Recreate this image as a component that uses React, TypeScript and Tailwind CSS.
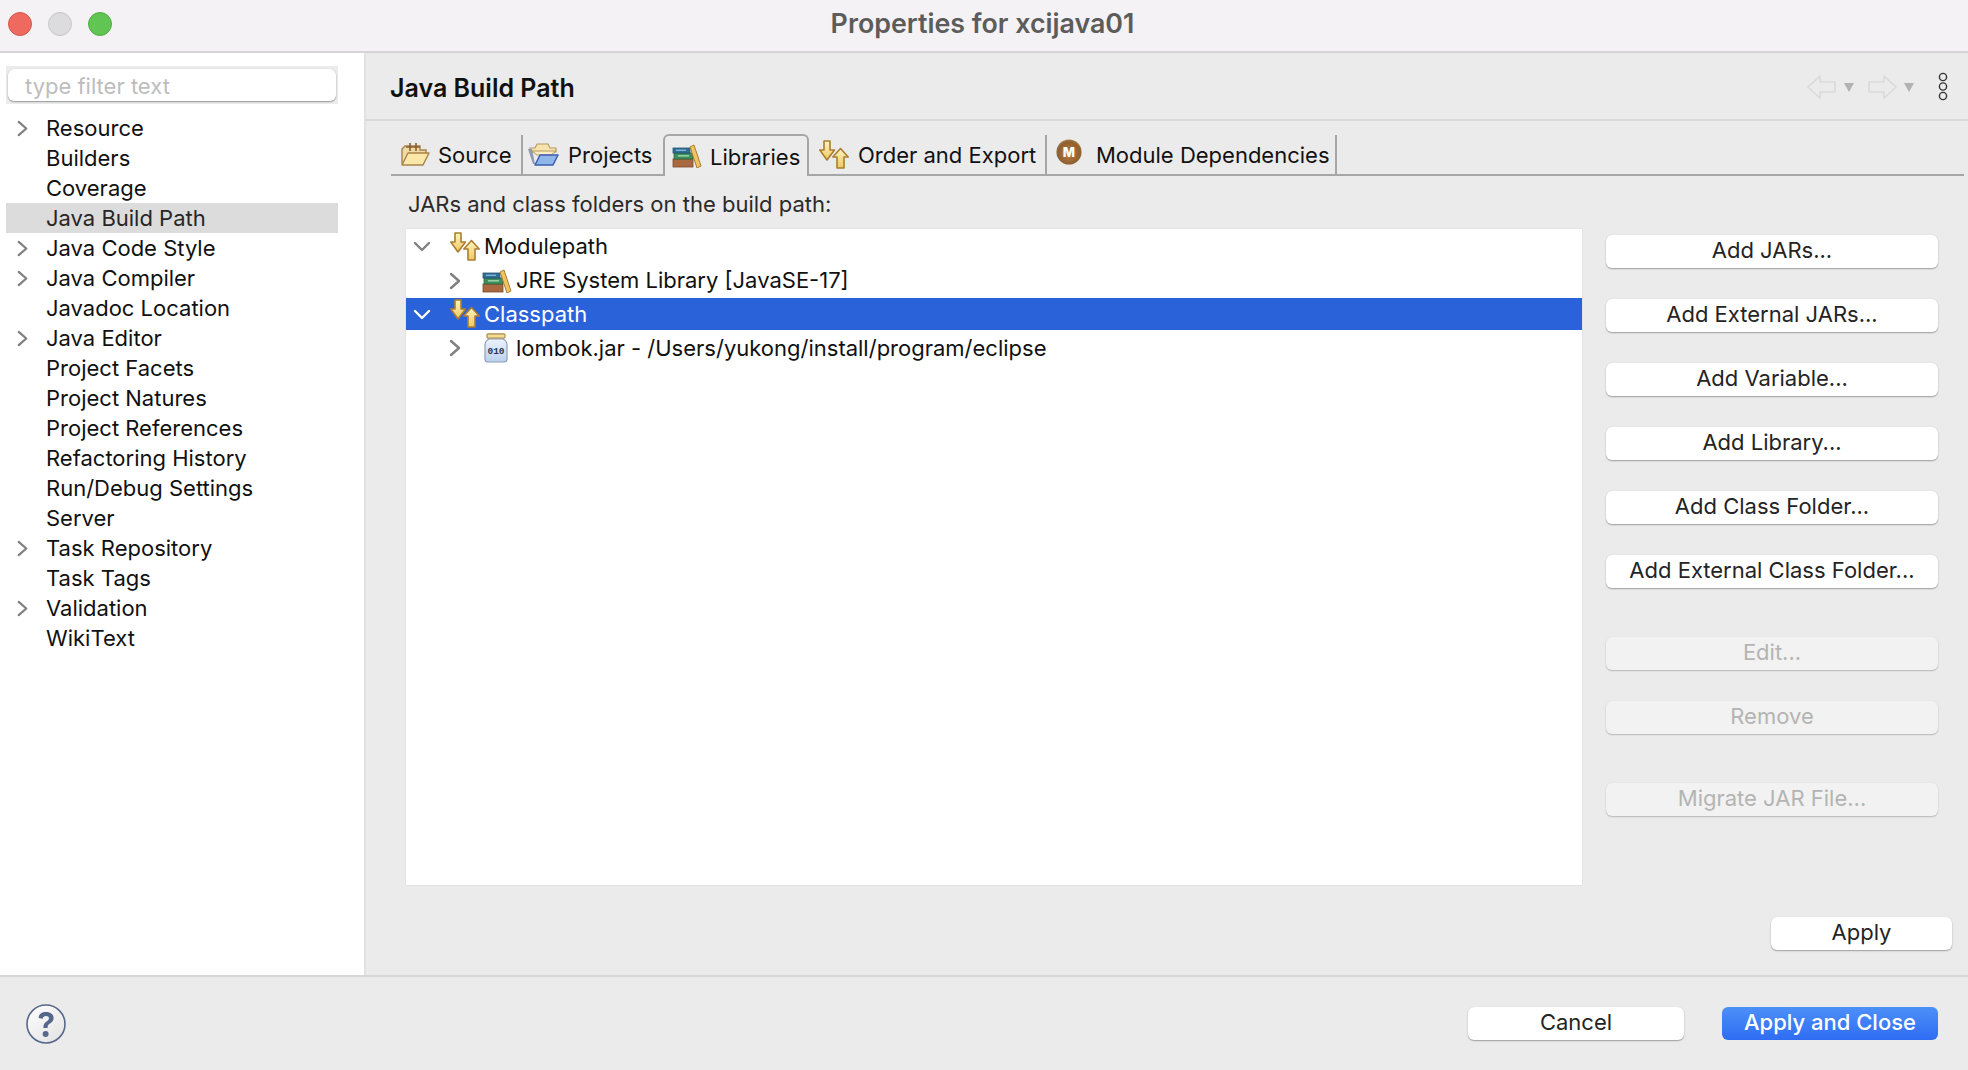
import React from "react";

const font = { fontFamily: "Inter, 'Liberation Sans', sans-serif" };

function Chevron({ down = false, white = false, size = 18 }: { down?: boolean; white?: boolean; size?: number }) {
  return (
    <svg width={size} height={size} viewBox="0 0 18 18" fill="none" stroke={white ? "#ffffff" : "#808080"} strokeWidth="2.4" strokeLinecap="round" strokeLinejoin="round">
      {down ? <polyline points="2,6 9,13 16,6" /> : <polyline points="5,2 13,9 5,16" />}
    </svg>
  );
}

function OrderIcon() {
  return (
    <svg width="30" height="29" viewBox="0 0 30 29">
      <defs>
        <linearGradient id="ord" x1="0" y1="0" x2="0" y2="1">
          <stop offset="0" stopColor="#fdf3c4" />
          <stop offset="1" stopColor="#f0c860" />
        </linearGradient>
      </defs>
      <path d="M5 1 H11 V10 H15.5 L8 20 L0.8 10 H5 Z" fill="url(#ord)" stroke="#a97f2f" strokeWidth="1.6" strokeLinejoin="round" />
      <path d="M21.5 8.5 L29.2 17 H25 V28 H18 V17 H13.8 Z" fill="url(#ord)" stroke="#a97f2f" strokeWidth="1.6" strokeLinejoin="round" />
    </svg>
  );
}

function BooksIcon() {
  return (
    <svg width="30" height="24" viewBox="0 0 30 24">
      <rect x="1" y="15" width="20" height="8" fill="#a9683f" stroke="#7d4a2a" strokeWidth="0.8" />
      <rect x="2" y="9" width="19" height="6" fill="#3f8d5e" stroke="#2a6a43" strokeWidth="0.8" />
      <rect x="6" y="11" width="11" height="1.6" fill="#8fd0a4" />
      <rect x="1" y="4" width="17" height="5" fill="#2f6f96" stroke="#24536f" strokeWidth="0.8" />
      <rect x="4" y="5.6" width="10" height="1.4" fill="#7cb4d2" />
      <path d="M18 3 L22 1 L29 22 L25 24 Z" fill="#efc263" stroke="#a97f2f" strokeWidth="1" strokeLinejoin="round" />
    </svg>
  );
}

function SourceFolder() {
  return (
    <svg width="30" height="24" viewBox="0 0 30 24">
      <path d="M2 22 V7 L5 4 H20 V8 H26 V12" fill="#efd9a4" stroke="#a9824a" strokeWidth="1.4" />
      <path d="M10 1 V9 M16 1 V9 M6 5 H20" stroke="#8a5f2c" strokeWidth="1.6" fill="none" />
      <path d="M2 23 L8 11 H29 L23 23 Z" fill="#fbe7a8" stroke="#a9824a" strokeWidth="1.4" strokeLinejoin="round" />
    </svg>
  );
}

function ProjectFolder() {
  return (
    <svg width="32" height="25" viewBox="0 0 32 25">
      <path d="M3 6 H8 L10 2 H21 L23 6 H29 V10 H3 Z" fill="#f6e3ae" stroke="#b59a5e" strokeWidth="1.2" />
      <path d="M1 7 H5 L8 22 H6 Z" fill="#8f9bb3" />
      <path d="M5 9 H29 L24 13 H10 Z" fill="#fbeec7" stroke="#b59a5e" strokeWidth="1" />
      <path d="M8 23 L13 13 H31 L26 23 Z" fill="#8fb6e8" stroke="#3e5db0" strokeWidth="1.5" strokeLinejoin="round" />
    </svg>
  );
}

function MavenIcon() {
  return (
    <svg width="26" height="26" viewBox="0 0 26 26">
      <defs>
        <radialGradient id="mvn" cx="0.5" cy="0.55" r="0.55">
          <stop offset="0" stopColor="#b5804a" />
          <stop offset="0.8" stopColor="#8f5f2e" />
          <stop offset="1" stopColor="#a97f4f" />
        </radialGradient>
      </defs>
      <circle cx="13" cy="13" r="12.6" fill="url(#mvn)" />
      <text x="13" y="17.5" textAnchor="middle" fontSize="13" fontWeight="800" fill="#ffffff" fontFamily="Inter, sans-serif">M</text>
    </svg>
  );
}

function JarIcon() {
  return (
    <svg width="24" height="30" viewBox="0 0 24 30">
      <defs>
        <linearGradient id="jar" x1="0" y1="0" x2="0" y2="1">
          <stop offset="0" stopColor="#eef3fb" />
          <stop offset="1" stopColor="#bcd0ec" />
        </linearGradient>
      </defs>
      <rect x="3" y="0.8" width="18" height="4.4" rx="1.2" fill="#f3dc97" stroke="#a98b45" strokeWidth="1.2" />
      <path d="M5 6 H19 Q23 8 23 12 V26 Q23 29 20 29 H4 Q1 29 1 26 V12 Q1 8 5 6 Z" fill="url(#jar)" stroke="#8f9fb8" strokeWidth="1.2" />
      <text x="12" y="20.5" textAnchor="middle" fontSize="9.5" fontWeight="800" fill="#2a3654" fontFamily="'Liberation Mono', monospace">010</text>
    </svg>
  );
}

function HelpIcon() {
  return (
    <svg width="40" height="40" viewBox="0 0 40 40">
      <defs>
        <linearGradient id="hlp" x1="0" y1="0" x2="0.8" y2="1">
          <stop offset="0" stopColor="#ffffff" />
          <stop offset="1" stopColor="#e4e4e4" />
        </linearGradient>
      </defs>
      <circle cx="20" cy="20" r="19" fill="url(#hlp)" stroke="#55688c" strokeWidth="1.6" />
      <path d="M12.6 14 C12.8 9.8 16 8 20 8 C24.6 8 27.6 10.4 27.6 14 C27.6 17 25.6 18.4 23.6 19.8 C22 21 21.6 21.8 21.6 24 H17.4 C17.4 21 18 19.4 20.2 17.8 C22 16.4 23 15.6 23 14.2 C23 12.8 21.8 12 20 12 C18.2 12 17 13 16.8 14.8 Z" fill="#55688c" />
      <circle cx="19.6" cy="30" r="3" fill="#55688c" />
    </svg>
  );
}

function NavArrow({ right = false }: { right?: boolean }) {
  return (
    <svg width="29" height="24" viewBox="0 0 29 24" fill="none" stroke="#dadada" strokeWidth="1.6" strokeLinejoin="round">
      {right ? <path d="M1 7 H16 V1 L28 12 L16 23 V17 H1 Z" /> : <path d="M28 7 H13 V1 L1 12 L13 23 V17 H28 Z" />}
    </svg>
  );
}

function Tri() {
  return <div className="w-0 h-0 border-l-[5px] border-r-[5px] border-t-[9px] border-l-transparent border-r-transparent border-t-[#b2b2b2]" />;
}

const navItems: [string, boolean][] = [
  ["Resource", true],
  ["Builders", false],
  ["Coverage", false],
  ["Java Build Path", false],
  ["Java Code Style", true],
  ["Java Compiler", true],
  ["Javadoc Location", false],
  ["Java Editor", true],
  ["Project Facets", false],
  ["Project Natures", false],
  ["Project References", false],
  ["Refactoring History", false],
  ["Run/Debug Settings", false],
  ["Server", false],
  ["Task Repository", true],
  ["Task Tags", false],
  ["Validation", true],
  ["WikiText", false],
];

function Btn({ label, disabled = false, w = "w-[332px]" }: { label: string; disabled?: boolean; w?: string }) {
  return (
    <div
      className={`${w} h-[33px] rounded-[6px] flex items-center justify-center text-[22px] leading-none pb-[3px] ${
        disabled
          ? "bg-[#f2f2f2] text-[#b4b4b4] shadow-[0_1px_1.5px_rgba(0,0,0,0.22),0_0_1px_rgba(0,0,0,0.08)]"
          : "bg-white text-[#242424] shadow-[0_1px_1.5px_rgba(0,0,0,0.32),0_0_1px_rgba(0,0,0,0.12)]"
      }`}
    >
      {label}
    </div>
  );
}

function Sep() {
  return <div className="w-[2px] h-[39px] bg-[#a6a6a6]" />;
}

export default function App() {
  return (
    <div className="w-[1968px] h-[1070px] flex flex-col bg-[#ebebeb] overflow-hidden text-[#1c1c1c] antialiased" style={font}>
      {/* Title bar */}
      <div className="relative h-[53px] shrink-0 bg-[#f4f2f5] border-b-2 border-[#d6d5d6] flex items-center justify-center">
        <div className="absolute left-[8px] top-[12px] flex gap-[16px]">
          <div className="w-[24px] h-[24px] rounded-full bg-[#ee6a5f] border border-[#d4574c]" />
          <div className="w-[24px] h-[24px] rounded-full bg-[#dcdbdd] border border-[#c6c5c7]" />
          <div className="w-[24px] h-[24px] rounded-full bg-[#61c554] border border-[#52ad46]" />
        </div>
        <div className="mt-[-5px] ml-[-3px] text-[26.8px] leading-none font-semibold text-[#5c5c5c]">Properties for xcijava01</div>
      </div>

      {/* Middle */}
      <div className="flex h-[922px] shrink-0">
        {/* Sidebar */}
        <div className="w-[366px] shrink-0 bg-white border-r-2 border-[#e2e2e2] pt-[13px]">
          <div className="ml-[6px] w-[332px] h-[38px] bg-[#ececec] flex items-center justify-center">
            <div className="w-[328px] h-[32px] rounded-[6px] bg-white shadow-[0_1px_1.5px_rgba(0,0,0,0.35),0_0_1px_rgba(0,0,0,0.2)] flex items-center pl-[17px] pt-[2px] text-[22px] leading-none text-[#bdbdbd]">
              type filter text
            </div>
          </div>
          <div className="mt-[9px] flex flex-col">
            {navItems.map(([name, arrow]) => (
              <div
                key={name}
                className={`ml-[6px] w-[332px] h-[30px] flex items-center text-[22px] leading-none ${
                  name === "Java Build Path" ? "bg-[#dcdcdc] text-[#262626]" : "text-[#111111]"
                }`}
              >
                <div className="w-[40px] pl-[8px] flex items-center">{arrow && <Chevron size={17} />}</div>
                <span>{name}</span>
              </div>
            ))}
          </div>
        </div>

        {/* Right panel */}
        <div className="flex-1 flex flex-col min-w-0">
          <div className="h-[68px] shrink-0 border-b-2 border-[#d9d9d9] flex items-center pl-[24px] pr-[19px]">
            <div className="text-[25px] leading-none font-semibold text-[#111111] mt-[4px]">Java Build Path</div>
            <div className="ml-auto flex items-center mt-[2px]">
              <NavArrow />
              <div className="ml-[8px]"><Tri /></div>
              <div className="ml-[14px]"><NavArrow right /></div>
              <div className="ml-[7px]"><Tri /></div>
              <svg className="ml-[23px]" width="12" height="30" viewBox="0 0 12 30" fill="none" stroke="#333333" strokeWidth="1.4">
                <circle cx="6" cy="5" r="3.6" />
                <circle cx="6" cy="14.5" r="3.6" />
                <circle cx="6" cy="24" r="3.6" />
              </svg>
            </div>
          </div>

          {/* Tabs */}
          <div className="mt-[13px] ml-[25px] mr-[4px] h-[42px] shrink-0 flex items-end border-b-2 border-[#a6a6a6] text-[22px] leading-none text-[#111111]">
            <div className="w-[130px] h-[40px] flex items-center pl-[9px] gap-[8px]"><SourceFolder /><span className="mt-[2px]">Source</span></div>
            <Sep />
            <div className="w-[140px] h-[40px] flex items-center pl-[4px] gap-[9px]"><ProjectFolder /><span className="mt-[2px]">Projects</span></div>
            <div className="w-[146px] h-[42px] -mb-[2px] bg-[#ececec] border-2 border-b-0 border-[#a6a6a6] rounded-t-[6px] flex items-center pl-[7px] gap-[8px]"><BooksIcon /><span className="mt-[2px]">Libraries</span></div>
            <div className="w-[236px] h-[40px] flex items-center pl-[10px] gap-[9px]"><OrderIcon /><span className="mt-[2px]">Order and Export</span></div>
            <Sep />
            <div className="w-[288px] h-[40px] flex items-center pl-[9px] gap-[14px]"><div className="-mt-[4px]"><MavenIcon /></div><span className="mt-[2px]">Module Dependencies</span></div>
            <Sep />
          </div>

          <div className="mt-[17px] ml-[42px] text-[22px] leading-none text-[#2a2a2a]">JARs and class folders on the build path:</div>

          {/* Tree + buttons */}
          <div className="mt-[14px] ml-[40px] flex">
            <div className="w-[1176px] h-[656px] bg-white shadow-[0_0_1px_rgba(0,0,0,0.2)] text-[22px] leading-none text-[#111111]">
              <div className="h-[34px] flex items-center pl-[7px]">
                <Chevron down />
                <div className="ml-[19px] mr-[4px]"><OrderIcon /></div>
                <span>Modulepath</span>
              </div>
              <div className="h-[35px] flex items-center pl-[40px]">
                <Chevron />
                <div className="ml-[18px] mr-[4px]"><BooksIcon /></div>
                <span className="-mt-[2px]">JRE System Library [JavaSE-17]</span>
              </div>
              <div className="h-[32px] flex items-center pl-[7px] bg-[#2a62d9] text-white">
                <Chevron down white />
                <div className="ml-[19px] mr-[4px] -mt-[2px]"><OrderIcon /></div>
                <span>Classpath</span>
              </div>
              <div className="h-[36px] flex items-center pl-[40px]">
                <Chevron />
                <div className="ml-[20px] mr-[8px]"><JarIcon /></div>
                <span>lombok.jar - /Users/yukong/install/program/eclipse</span>
              </div>
            </div>
            <div className="ml-[24px] pt-[6px] flex flex-col">
              <div className="flex flex-col gap-[31px]">
                <Btn label="Add JARs..." />
                <Btn label="Add External JARs..." />
                <Btn label="Add Variable..." />
                <Btn label="Add Library..." />
                <Btn label="Add Class Folder..." />
                <Btn label="Add External Class Folder..." />
              </div>
              <div className="mt-[49px]"><Btn label="Edit..." disabled /></div>
              <div className="mt-[31px]"><Btn label="Remove" disabled /></div>
              <div className="mt-[49px]"><Btn label="Migrate JAR File..." disabled /></div>
            </div>
          </div>

          <div className="mt-[32px] ml-[1405px]"><Btn label="Apply" w="w-[181px]" /></div>
        </div>
      </div>

      {/* Footer */}
      <div className="flex-1 border-t-2 border-[#d6d6d6] flex items-start relative">
        <div className="ml-[26px] mt-[27px]"><HelpIcon /></div>
        <div className="ml-auto mr-[30px] mt-[30px] flex gap-[38px]">
          <Btn label="Cancel" w="w-[216px]" />
          <div className="w-[216px] h-[33px] pb-[3px] rounded-[6px] bg-gradient-to-b from-[#4d8ff8] to-[#2f6cf3] text-white flex items-center justify-center text-[22px] font-medium leading-none">
            Apply and Close
          </div>
        </div>
      </div>
    </div>
  );
}
